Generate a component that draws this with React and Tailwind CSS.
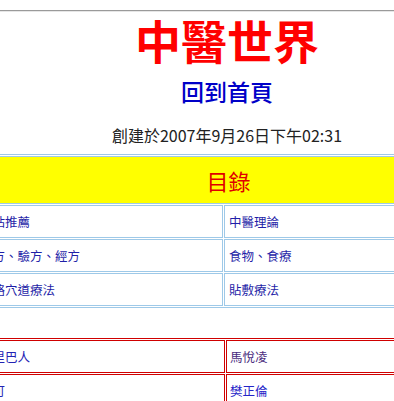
import React from 'react';

const catalog = [
  ['網站推薦', '中醫理論'],
  ['偏方、驗方、經方', '食物、食療'],
  ['經絡穴道療法', '貼敷療法'],
];

const people = [
  [
    { name: '下里巴人', color: 'text-[#2323b4]' },
    { name: '馬悅凌', color: 'text-[#4b2d80]' },
  ],
  [
    { name: '李可', color: 'text-[#2323b4]' },
    { name: '樊正倫', color: 'text-[#2424c8]' },
  ],
];

export default function App() {
  return (
    <div className="w-[394px] h-[401px] overflow-hidden bg-white font-['Noto_Sans_CJK_TC','Noto_Sans_CJK_SC',sans-serif]">
      <div className="w-[454px] pt-[10px]">
        <div className="border-t border-b border-t-[#9a9a9a] border-b-[#e6e6e6]" />

        <h1 className="mt-[2px] text-center text-[46px] leading-[50px] font-semibold text-[#ff0000]">
          中醫世界
        </h1>
        <div className="mt-[12px] text-center text-[23px] leading-[30px] font-medium text-[#0000c8]">
          回到首頁
        </div>
        <div className="mt-[17px] text-center text-[16px] leading-[24px] text-[#222]">
          創建於2007年9月26日下午02:31
        </div>

        {/* 目錄 */}
        <table className="mt-[7px] -ml-[27px] w-[501px] table-fixed border border-[#9ec9e8] border-separate border-spacing-[1px]">
          <tbody>
            <tr>
              <td
                colSpan={2}
                className="border border-[#9ec9e8] bg-[#ffff00] text-center text-[22px] leading-[30px] py-[8px] pl-[14px] pr-[4px] text-[#e00000]"
              >
                目錄
              </td>
            </tr>
            {catalog.map((row, i) => (
              <tr key={i}>
                {row.map(item => (
                  <td
                    key={item}
                    className="border border-[#9ec9e8] px-[4px] py-[6px] text-[12.5px] leading-[19px] text-[#1f1fa8] whitespace-nowrap"
                  >
                    {item}
                  </td>
                ))}
              </tr>
            ))}
          </tbody>
        </table>

        {/* 名醫 */}
        <table className="mt-[30px] -ml-[26px] w-[503px] table-fixed border border-[#d00000] border-separate border-spacing-[1px]">
          <tbody>
            {people.map((row, i) => (
              <tr key={i}>
                {row.map(p => (
                  <td
                    key={p.name}
                    className={`border border-[#d00000] px-[3px] py-[6px] text-[12.5px] leading-[19px] whitespace-nowrap ${p.color}`}
                  >
                    {p.name}
                  </td>
                ))}
              </tr>
            ))}
          </tbody>
        </table>
      </div>
    </div>
  );
}
